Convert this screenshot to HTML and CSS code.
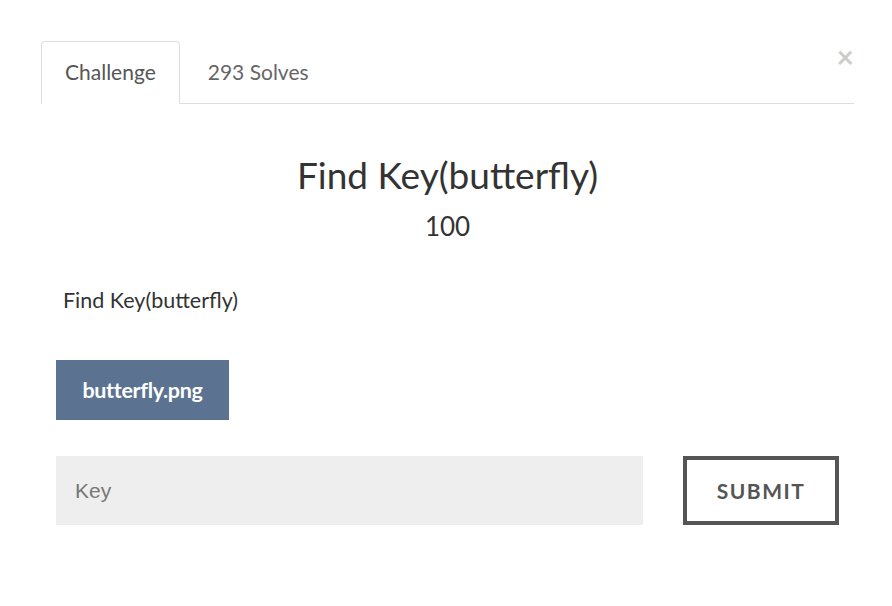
FILE: index.html
```html
<!DOCTYPE html>
<html>
<head>
<meta charset="utf-8">
<link rel="stylesheet" href="styles.css">
</head>
<body>
<div class="modal">
  <button class="close" aria-label="Close">×</button>
  <ul class="tabs">
    <li class="tab active">Challenge</li>
    <li class="tab">293 Solves</li>
  </ul>
  <div class="pane">
    <h2 class="title">Find Key(butterfly)</h2>
    <div class="value">100</div>
    <p class="desc">Find Key(butterfly)</p>
    <a class="file" href="#">butterfly.png</a>
    <div class="submit-row">
      <input class="key" type="text" placeholder="Key">
      <button class="submit">SUBMIT</button>
    </div>
  </div>
</div>
</body>
</html>
```

FILE: styles.css
```css
* { box-sizing: border-box; }
html, body { margin: 0; padding: 0; background: #fff; }
body { font-family: Lato, "Open Sans", sans-serif; color: #333; }

.modal {
  position: relative;
  width: 892px;
  padding: 41px 38px 0 41px;
}

.close {
  position: absolute;
  top: 41px;
  right: 38px;
  border: 0;
  background: none;
  font-family: Lato, sans-serif;
  font-size: 30px;
  line-height: 30px;
  padding: 0;
  color: #ccc;
  font-weight: 700;
}

.tabs {
  list-style: none;
  margin: 0;
  padding: 0;
  display: flex;
  border-bottom: 1px solid #ddd;
}
.tab {
  height: 63px;
  padding: 0 23px 2px;
  display: flex;
  align-items: center;
  font-size: 21px;
  color: #666;
  border: 1px solid transparent;
  border-radius: 4px 4px 0 0;
  margin-bottom: -1px;
  margin-right: 4px;
}
.tab.active {
  color: #555;
  border-color: #ddd;
  border-bottom-color: #fff;
  background: #fff;
}

.pane { padding: 0 15px; }

.title {
  margin: 49px 0 0;
  text-align: center;
  font-weight: 400;
  font-size: 37px;
  line-height: 44px;
  color: #333;
}
.value {
  text-align: center;
  font-size: 26px;
  line-height: 32px;
  margin-top: 13px;
  color: #333;
}
.desc {
  margin: 45px 0 0 7px;
  font-size: 21.5px;
  line-height: 26px;
  color: #333;
}
.file {
  display: inline-flex;
  align-items: center;
  justify-content: center;
  margin-top: 47px;
  width: 173px;
  height: 60px;
  background: #5b7290;
  color: #fff;
  font-weight: 700;
  font-size: 21.5px;
  text-decoration: none;
  letter-spacing: -0.3px;
}

.submit-row {
  display: flex;
  margin-top: 36px;
  gap: 40px;
}
.key {
  flex: 0 0 587px;
  height: 69px;
  border: 0;
  background: #eee;
  padding: 0 19px;
  font-family: "Liberation Sans", Arial, sans-serif;
  font-size: 21px;
  color: #555;
  outline: none;
}
.key::placeholder { color: #777; }
.submit {
  flex: 0 0 156px;
  height: 69px;
  border: 4px solid #555;
  background: #fff;
  color: #555;
  font-family: Lato, sans-serif;
  font-weight: 700;
  font-size: 21px;
  letter-spacing: 1.5px;
  padding: 0;
}
```
